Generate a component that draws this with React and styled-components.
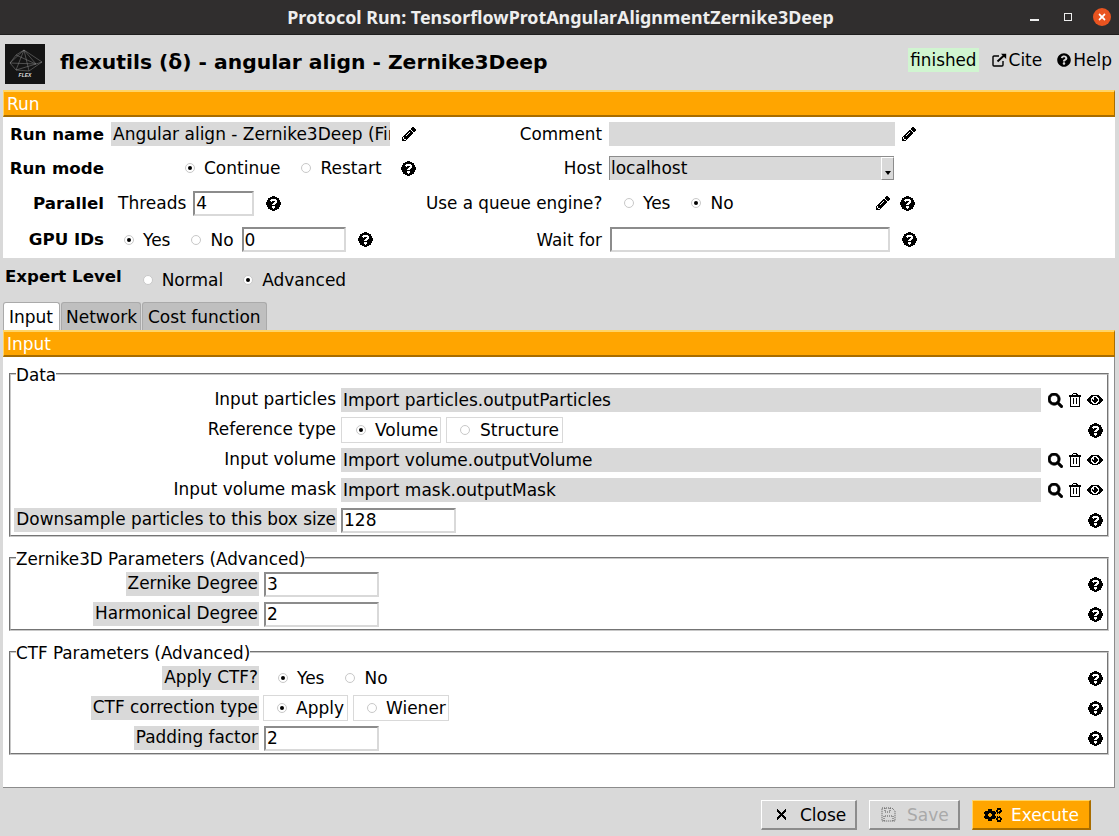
import React from "react";
import styled, { createGlobalStyle } from "styled-components";
import { FaQuestionCircle, FaPencilAlt, FaSearch, FaRegTrashAlt, FaEye, FaTimes, FaCogs } from "react-icons/fa";

const Global = createGlobalStyle`
  html, body { margin: 0; padding: 0; }
  body { background: #d9d9d9; font-family: "DejaVu Sans", sans-serif; font-size: 17px; color: #000; }
  * { box-sizing: border-box; }
`;

const Page = styled.div`width: 1119px; height: 836px; overflow: hidden; display: flex; flex-direction: column; background: #d9d9d9;`;

const TitleBar = styled.div`
  height: 35px; flex: none; background: #302e2e; border-bottom: 1px solid #1f1e1e;
  display: grid; grid-template-columns: 1fr auto 1fr; align-items: center;
`;
const WindowTitle = styled.div`font-family: "Noto Sans", "Open Sans", sans-serif; font-weight: 700; font-size: 17.85px; color: #eee; grid-column: 2; margin-left: 2px;`;
const WindowControls = styled.div`grid-column: 3; display: flex; justify-content: flex-end; align-items: center; padding-right: 8px; gap: 0;`;
const MinBtn = styled.span`width: 9px; height: 2px; background: #eee; margin: 6px 25px 0 0;`;
const MaxBtn = styled.span`width: 8px; height: 8px; border: 1px solid #eee; margin-right: 21px;`;
const CloseBtn = styled.span`width: 18px; height: 18px; border-radius: 50%; background: #e95420; color: #fff; display: flex; align-items: center; justify-content: center;`;

const Header = styled.div`height: 55px; flex: none; display: flex; align-items: center; padding: 0 7px 0 5px;`;
const Logo = styled.svg`width: 40px; height: 40px; flex: none; margin-top: 3px;`;
const AppTitle = styled.h1`margin: 0 0 2px 15px; font-size: 20.3px; font-weight: 700; flex: 1;`;
const Status = styled.span`background: #d0f5d0; height: 24px; line-height: 24px; padding: 0 2px; position: relative; top: -3px; font-size: 16.8px;`;
const TopLink = styled.span`display: inline-flex; align-items: center; gap: 2px; margin-left: ${p => p.$ml}px; position: relative; top: -3px; svg { flex: none; }`;

const Band = styled.div`
  flex: none; height: ${p => p.$h}px; margin: 0 4px 0 3px; background: #ffa500; color: #fff;
  border-top: 2px solid #ffd466; border-left: 1px solid #ffd466; border-right: 1px solid #a86d00; border-bottom: 2px solid #a86d00;
  padding-left: 3px; display: flex; align-items: center;
`;

const RunPanel = styled.div`
  flex: none; height: 141px; margin: 0 4px 0 3px; background: #fff;
  display: grid; grid-template-rows: 34px 34px 36px 37px; grid-template-columns: 101px 322px 176px 1fr;
  align-items: center;
`;
const BoldLabel = styled.span`font-weight: 700; font-size: 16.67px; text-align: right; white-space: nowrap;`;
const PlainLabel = styled.span`font-size: 16.8px; text-align: right; white-space: nowrap;`;
const Group = styled.div`display: flex; align-items: center; padding-left: ${p => p.$pad || 0}px; min-width: 0; height: 100%;`;
const ReadField = styled.div`
  height: 24px; line-height: 24px; background: #d9d9d9; padding: 0 2px; white-space: nowrap; overflow: hidden;
  width: ${p => (p.$w ? `${p.$w}px` : "100%")}; flex: none;
`;
const Entry = styled.input`
  width: ${p => p.$w}px; height: 25px; flex: none; padding: 0 1px; background: #fff; outline: none;
  font: inherit; color: #000; border-style: solid; border-width: 2px; border-color: #8c8c8c #d9d9d9 #d9d9d9 #8c8c8c;
  margin-left: ${p => p.$ml || 0}px;
`;
const Select = styled.div`
  width: 285px; height: 24px; display: flex; background: #d9d9d9; border-top: 1px solid #8c8c8c; border-left: 1px solid #8c8c8c; line-height: 22px; padding-left: 1px;
  justify-content: space-between;
`;
const SelectArrow = styled.span`
  width: 13px; height: 23px; border: 1px solid #8c8c8c; border-top-color: #fff; border-left-color: #fff; flex: none; display: flex; align-items: flex-end; justify-content: center; padding-bottom: 4px;
  &::after { content: ""; border-left: 3px solid transparent; border-right: 3px solid transparent; border-top: 4px solid #000; }
`;
const Icon = styled.span`display: inline-flex; flex: none; margin-left: ${p => p.$ml || 0}px; svg { display: block; shape-rendering: crispEdges; }`;
const HeavyIcon = styled(Icon)`svg { stroke: currentColor; stroke-width: 24px; shape-rendering: auto; }`;
const OptionRow = styled.span`display: inline-flex; align-items: center; gap: 9px; margin-left: ${p => p.$ml || 0}px; white-space: nowrap; line-height: 20px;`;
const Dot = styled.span`
  width: 10px; height: 10px; margin-left: 1px; border-radius: 50%; background: #fff; border: 1px solid #c8c8c8; flex: none; display: flex; align-items: center; justify-content: center;
  &::after { content: ""; width: 4px; height: 4px; border-radius: 50%; background: ${p => (p.$on ? "#000" : "transparent")}; }
`;
const BoxedOption = styled.span`
  display: inline-flex; align-items: center; gap: ${p => p.$gap}px; height: 26px; width: ${p => p.$w}px; padding-left: ${p => p.$pad}px; margin-left: ${p => p.$ml || 0}px;
  border: 1px solid #d9d9d9; background: #fff; white-space: nowrap;
`;

const ExpertRow = styled.div`flex: none; height: 44px; padding-left: 5px; display: flex; align-items: center;`;
const ExpertLabel = styled.span`font-weight: 700; font-size: 16.6px; position: relative; top: -4px; margin-right: 20px;`;

const Tabs = styled.div`flex: none; height: 28px; margin-left: 3px; display: flex; gap: 1px;`;
const Tab = styled.div`
  height: 28px; padding: 0 ${p => p.$pad}px; display: flex; align-items: center; border: 1px solid #aaa; border-bottom: none; border-radius: 3px 3px 0 0; width: ${p => p.$w}px;
  background: ${p => (p.$on ? "#fff" : "#bfbfbf")};
`;

const TabPanel = styled.div`
  flex: none; height: 431px; margin: 0 4px 0 3px; background: #fff; border-right: 1px solid #8c8c8c; border-bottom: 1px solid #8c8c8c; display: flex; flex-direction: column;
`;
const Frame = styled.fieldset`
  margin: ${p => p.$mt}px 5px 0 6px; padding: 1px 0 0 0; border: 2px groove #c8c8c8; min-width: 0;
`;
const Legend = styled.legend`padding: 0; margin-left: 5px; line-height: 20px; white-space: nowrap; font-size: 16.8px; position: relative; top: 1px;`;
const FormRow = styled.div`height: 30px; display: flex; align-items: center;`;
const FieldLabel = styled.div`flex: none; width: ${p => p.$w}px; display: flex; justify-content: flex-end;`;
const LabelText = styled.span`
  height: 24px; line-height: 22px; padding: 0 1px 0 2px; white-space: nowrap; font-size: 16.9px; background: ${p => (p.$adv ? "#d9d9d9" : "transparent")};
`;
const Body = styled.div`flex: 1; min-width: 0; margin-left: 4px; display: flex; align-items: center;`;
const Actions = styled.div`flex: none; width: 66px; display: flex; justify-content: flex-end; align-items: center; gap: 5px; padding-right: ${p => p.$pr}px;`;

const Footer = styled.div`flex: 1; display: flex; justify-content: flex-end; align-items: flex-start; padding: 12px 28px 0 0; gap: 12px;`;
const Button = styled.button`
  height: 30px; width: ${p => p.$w}px; font: inherit; display: flex; align-items: center; padding: 0 0 0 ${p => p.$pad}px; gap: ${p => p.$gap}px;
  background: ${p => (p.$primary ? "#ffa500" : "#d9d9d9")}; color: ${p => (p.$primary ? "#fff" : p.disabled ? "#a9a9a9" : "#000")};
  border: 1px solid; border-width: 1px 2px 2px 1px;
  border-color: ${p => (p.$primary ? "#ffd466 #a86d00 #a86d00 #ffd466" : "#fff #8c8c8c #8c8c8c #fff")};
`;
const GearIcon = styled(Icon)`color: #000;`;

const Help = ({ ml }) => <Icon $ml={ml}><FaQuestionCircle size={15} /></Icon>;
const Pencil = ({ ml }) => <Icon $ml={ml}><FaPencilAlt size={14} /></Icon>;
const Option = ({ on, ml, children }) => <OptionRow $ml={ml}><Dot $on={on} />{children}</OptionRow>;
const Boxed = ({ on, ml, w, pad, gap = 9, children }) => <BoxedOption $ml={ml} $w={w} $pad={pad} $gap={gap}><Dot $on={on} />{children}</BoxedOption>;

const Pointers = () => (
  <Actions $pr={4}>
    <HeavyIcon><FaSearch size={15} /></HeavyIcon>
    <Icon><FaRegTrashAlt size={14} /></Icon>
    <Icon><FaEye size={16} /></Icon>
  </Actions>
);
const HelpAction = () => <Actions $pr={4}><Help /></Actions>;

const FlexLogo = () => (
  <Logo viewBox="0 0 40 40">
    <rect width="40" height="40" fill="#141414" />
    <g stroke="#8a8a8a" strokeWidth="0.5" fill="none">
      <path d="M5 19 L19 6 L31 20 L37 18 L24 27 L11 26 Z M19 6 L24 27 M5 19 L31 20 M19 6 L11 26 M11 11 L31 20 M11 11 L19 6 M11 11 L5 19 M11 26 L31 20 M37 18 L19 6" />
    </g>
    <text x="20" y="33" fontSize="5" fontWeight="700" fontStyle="italic" fill="#ddd" textAnchor="middle" fontFamily="'Liberation Sans', sans-serif">FLEX</text>
  </Logo>
);

const CiteIcon = () => (
  <svg width="15" height="14" viewBox="0 0 15 14" fill="none" stroke="#000" strokeWidth="1.4">
    <path d="M7 3H2a1 1 0 0 0-1 1v8a1 1 0 0 0 1 1h8a1 1 0 0 0 1-1V8" />
    <path d="M5.5 8.5L12 2.5" strokeWidth="2" />
    <path d="M9 .8h5.2V6z" stroke="none" fill="#000" />
  </svg>
);
const SaveIcon = () => (
  <svg width="15" height="15" viewBox="0 0 15 15" fill="none" stroke="#555" strokeWidth="1" strokeDasharray="1 1">
    <path d="M1 1h10l3 3v10H1z" /><path d="M4 1v4h5V1M3 14V9h9v5" />
  </svg>
);

export default function App() {
  return (
    <Page>
      <Global />
      <TitleBar>
        <WindowTitle>Protocol Run: TensorflowProtAngularAlignmentZernike3Deep</WindowTitle>
        <WindowControls>
          <MinBtn /><MaxBtn />
          <CloseBtn><FaTimes size={10} /></CloseBtn>
        </WindowControls>
      </TitleBar>

      <Header>
        <FlexLogo />
        <AppTitle>flexutils (δ) - angular align - Zernike3Deep</AppTitle>
        <Status>finished</Status>
        <TopLink $ml={13}><CiteIcon />Cite</TopLink>
        <TopLink $ml={15}><FaQuestionCircle size={14} />Help</TopLink>
      </Header>

      <Band $h={27}>Run</Band>
      <RunPanel>
        <BoldLabel>Run name</BoldLabel>
        <Group $pad={7}><ReadField $w={279}>Angular align - Zernike3Deep (Final)</ReadField><Pencil ml={12} /></Group>
        <PlainLabel>Comment</PlainLabel>
        <Group $pad={7}><ReadField $w={286} /><Pencil ml={7} /></Group>

        <BoldLabel>Run mode</BoldLabel>
        <Group $pad={80}><Option on>Continue</Option><Option ml={20}>Restart</Option><Help ml={19} /></Group>
        <PlainLabel>Host</PlainLabel>
        <Group $pad={7}><Select>localhost<SelectArrow /></Select></Group>

        <BoldLabel>Parallel</BoldLabel>
        <Group $pad={14}>Threads<Entry $w={61} $ml={7} readOnly value="4" /><Help ml={12} /></Group>
        <PlainLabel>Use a queue engine?</PlainLabel>
        <Group $pad={21}><Option>Yes</Option><Option on ml={20}>No</Option><Pencil ml={142} /><Help ml={10} /></Group>

        <BoldLabel>GPU IDs</BoldLabel>
        <Group $pad={19}><Option on>Yes</Option><Option ml={20}>No</Option><Entry $w={104} $ml={8} readOnly value="0" /><Help ml={12} /></Group>
        <PlainLabel>Wait for</PlainLabel>
        <Group $pad={8}><Entry $w={280} readOnly value="" /><Help ml={12} /></Group>
      </RunPanel>

      <ExpertRow>
        <ExpertLabel>Expert Level</ExpertLabel>
        <Option>Normal</Option>
        <Option on ml={19}>Advanced</Option>
      </ExpertRow>

      <Tabs>
        <Tab $on $w={57} $pad={5}>Input</Tab>
        <Tab $w={80} $pad={4}>Network</Tab>
        <Tab $w={125} $pad={5}>Cost function</Tab>
      </Tabs>

      <Band $h={27}>Input</Band>
      <TabPanel>
        <Frame $mt={7}>
          <Legend>Data</Legend>
          <FormRow><FieldLabel $w={326}><LabelText>Input particles</LabelText></FieldLabel><Body><ReadField>Import particles.outputParticles</ReadField></Body><Pointers /></FormRow>
          <FormRow><FieldLabel $w={326}><LabelText>Reference type</LabelText></FieldLabel><Body><Boxed on w={100} pad={13}>Volume</Boxed><Boxed ml={5} w={117} pad={12} gap={10}>Structure</Boxed></Body><HelpAction /></FormRow>
          <FormRow><FieldLabel $w={326}><LabelText>Input volume</LabelText></FieldLabel><Body><ReadField>Import volume.outputVolume</ReadField></Body><Pointers /></FormRow>
          <FormRow><FieldLabel $w={326}><LabelText>Input volume mask</LabelText></FieldLabel><Body><ReadField>Import mask.outputMask</ReadField></Body><Pointers /></FormRow>
          <FormRow><FieldLabel $w={326}><LabelText $adv>Downsample particles to this box size</LabelText></FieldLabel><Body><Entry $w={115} readOnly value="128" /></Body><HelpAction /></FormRow>
        </Frame>

        <Frame $mt={11}>
          <Legend>Zernike3D Parameters (Advanced)</Legend>
          <FormRow><FieldLabel $w={248}><LabelText $adv>Zernike Degree</LabelText></FieldLabel><Body><Entry $w={115} $ml={1} readOnly value="3" /></Body><HelpAction /></FormRow>
          <FormRow><FieldLabel $w={248}><LabelText $adv>Harmonical Degree</LabelText></FieldLabel><Body><Entry $w={115} $ml={1} readOnly value="2" /></Body><HelpAction /></FormRow>
        </Frame>

        <Frame $mt={11}>
          <Legend>CTF Parameters (Advanced)</Legend>
          <FormRow><FieldLabel $w={248}><LabelText $adv>Apply CTF?</LabelText></FieldLabel><Body><Option on ml={14}>Yes</Option><Option ml={20}>No</Option></Body><HelpAction /></FormRow>
          <FormRow><FieldLabel $w={248}><LabelText $adv>CTF correction type</LabelText></FieldLabel><Body><Boxed on w={85} pad={12}>Apply</Boxed><Boxed ml={5} w={96} pad={12}>Wiener</Boxed></Body><HelpAction /></FormRow>
          <FormRow><FieldLabel $w={248}><LabelText $adv>Padding factor</LabelText></FieldLabel><Body><Entry $w={115} $ml={1} readOnly value="2" /></Body><HelpAction /></FormRow>
        </Frame>
      </TabPanel>

      <Footer>
        <Button $w={96} $pad={12} $gap={11}><Icon><FaTimes size={15} /></Icon>Close</Button>
        <Button $w={91} $pad={11} $gap={11} disabled><SaveIcon />Save</Button>
        <Button $w={119} $primary $pad={11} $gap={9}><GearIcon><FaCogs size={18} /></GearIcon>Execute</Button>
      </Footer>
    </Page>
  );
}
